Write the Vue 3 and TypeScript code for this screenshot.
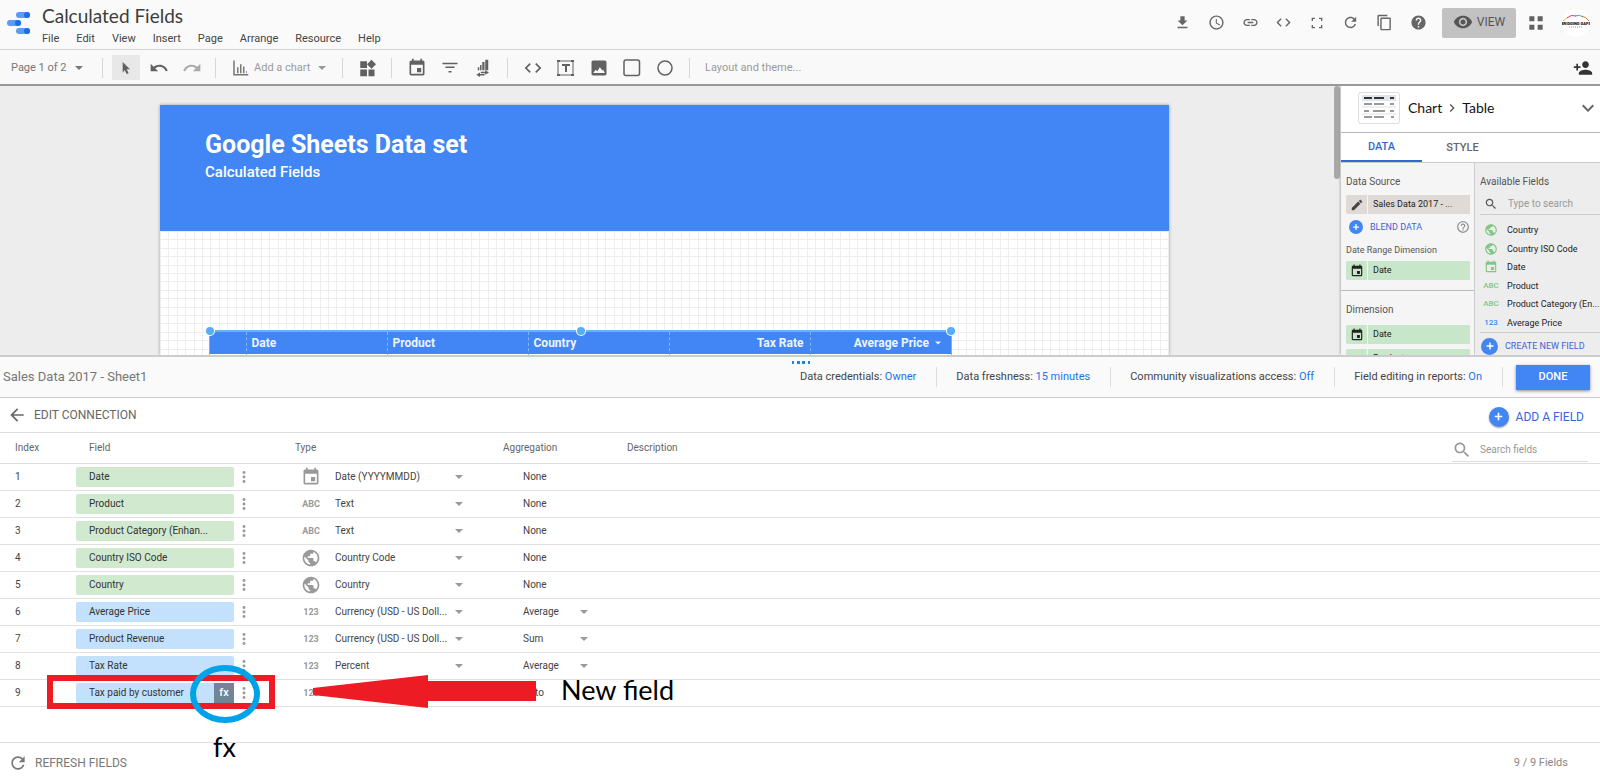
<script setup lang="ts">
import { h, ref, type FunctionalComponent } from 'vue'

const glyphs = {
  download: 'M19 9h-4V3H9v6H5l7 7 7-7zM5 18v2h14v-2H5z',
  schedule: 'M11.99 2C6.47 2 2 6.48 2 12s4.47 10 9.99 10C17.52 22 22 17.52 22 12S17.52 2 11.99 2zM12 20c-4.42 0-8-3.58-8-8s3.58-8 8-8 8 3.58 8 8-3.58 8-8 8zm.5-13H11v6l5.25 3.15.75-1.23-4.5-2.67z',
  link: 'M3.9 12c0-1.71 1.39-3.1 3.1-3.1h4V7H7c-2.76 0-5 2.24-5 5s2.24 5 5 5h4v-1.9H7c-1.71 0-3.1-1.39-3.1-3.1zM8 13h8v-2H8v2zm9-6h-4v1.9h4c1.71 0 3.1 1.39 3.1 3.1s-1.39 3.1-3.1 3.1h-4V17h4c2.76 0 5-2.24 5-5s-2.24-5-5-5z',
  code: 'M9.4 16.6L4.8 12l4.6-4.6L8 6l-6 6 6 6 1.4-1.4zm5.2 0l4.6-4.6-4.6-4.6L16 6l6 6-6 6-1.4-1.4z',
  fullscreen: 'M6 15H4v5h5v-2H6v-3zM4 9h2V6h3V4H4v5zm14 9h-3v2h5v-5h-2v3zM15 4v2h3v3h2V4h-5z',
  refresh: 'M17.65 6.35C16.2 4.9 14.21 4 12 4c-4.42 0-7.99 3.58-7.99 8s3.57 8 7.99 8c3.73 0 6.84-2.55 7.73-6h-2.08c-.82 2.33-3.04 4-5.65 4-3.31 0-6-2.69-6-6s2.69-6 6-6c1.66 0 3.14.69 4.22 1.78L13 11h7V4l-2.35 2.35z',
  copy: 'M16 1H4c-1.1 0-2 .9-2 2v14h2V3h12V1zm3 4H8c-1.1 0-2 .9-2 2v14c0 1.1.9 2 2 2h11c1.1 0 2-.9 2-2V7c0-1.1-.9-2-2-2zm0 16H8V7h11v14z',
  help: 'M12 2C6.48 2 2 6.48 2 12s4.48 10 10 10 10-4.48 10-10S17.52 2 12 2zm1 17h-2v-2h2v2zm2.07-7.75l-.9.92C13.45 12.9 13 13.5 13 15h-2v-.5c0-1.1.45-2.1 1.17-2.83l1.24-1.26c.37-.36.59-.86.59-1.41 0-1.1-.9-2-2-2s-2 .9-2 2H8c0-2.21 1.79-4 4-4s4 1.79 4 4c0 .88-.36 1.68-.93 2.25z',
  helpOutline: 'M11 18h2v-2h-2v2zm1-16C6.48 2 2 6.48 2 12s4.48 10 10 10 10-4.48 10-10S17.52 2 12 2zm0 18c-4.41 0-8-3.59-8-8s3.59-8 8-8 8 3.59 8 8-3.59 8-8 8zm0-14c-2.21 0-4 1.79-4 4h2c0-1.1.9-2 2-2s2 .9 2 2c0 2-3 1.75-3 5h2c0-2.25 3-2.5 3-5 0-2.21-1.79-4-4-4z',
  eye: 'M12 4.5C7 4.5 2.73 7.61 1 12c1.73 4.39 6 7.5 11 7.5s9.27-3.11 11-7.5c-1.73-4.39-6-7.5-11-7.5zM12 17c-2.76 0-5-2.24-5-5s2.24-5 5-5 5 2.24 5 5-2.24 5-5 5zm0-8c-1.66 0-3 1.34-3 3s1.34 3 3 3 3-1.34 3-3-1.34-3-3-3z',
  tiles: 'M4 4h6v6H4zM14 4h6v6h-6zM4 14h6v6H4zM14 14h6v6h-6z',
  cursor: 'M7 3l11 11h-5l3 6-3 1-3-6-3 4z',
  undo: 'M12.5 8c-2.65 0-5.05.99-6.9 2.6L2 7v9h9l-3.62-3.62c1.39-1.16 3.16-1.88 5.12-1.88 3.54 0 6.55 2.31 7.6 5.5l2.37-.78C21.08 11.03 17.15 8 12.5 8z',
  redo: 'M18.4 10.6C16.55 8.99 14.15 8 11.5 8c-4.65 0-8.58 3.03-9.96 7.22L3.9 16c1.05-3.19 4.05-5.5 7.6-5.5 1.95 0 3.73.72 5.12 1.88L13 16h9V7l-3.6 3.6z',
  chart: 'M3 2h2v18h18v2H3zM8 11h2v8H8zM12 7h2v12h-2zM16 10h2v9h-2zM20 16h1v3h-1z',
  widgets: 'M3 3h9v9H3zM3 14h9v9H3zM14 14h8v9h-8zM18 1l6 6-6 6-6-6z',
  event: 'M17 12h-5v5h5v-5zM16 1v2H8V1H6v2H5c-1.11 0-1.99.9-1.99 2L3 19c0 1.1.89 2 2 2h14c1.1 0 2-.9 2-2V5c0-1.1-.9-2-2-2h-1V1h-2zm3 18H5V8h14v11z',
  filter: 'M10 18h4v-2h-4v2zM2 5v2h20V5H2zm4 7h12v-2H6v2z',
  data: 'M15 1h4v14h-4zM11 4h3v11h-3zM8 8h2v7H8zM5 11h2v4H5zM15 15l5 3-5 3v-2H9v-2h6zM8 18v2h6v2H8v2l-5-3z',
  image: 'M21 19V5c0-1.1-.9-2-2-2H5c-1.1 0-2 .9-2 2v14c0 1.1.9 2 2 2h14c1.1 0 2-.9 2-2zM5 18l3-4 2 2 3-5 3 4 1-1 2 4z',
  personAdd: 'M15 12c2.21 0 4-1.79 4-4s-1.79-4-4-4-4 1.79-4 4 1.79 4 4 4zm-9-2V7H4v3H1v2h3v3h2v-3h3v-2H6zm9 4c-2.67 0-8 1.34-8 4v2h16v-2c0-2.66-5.33-4-8-4z',
  edit: 'M3 17.25V21h3.75L17.81 9.94l-3.75-3.75L3 17.25zM20.71 7.04c.39-.39.39-1.02 0-1.41l-2.34-2.34c-.39-.39-1.02-.39-1.41 0l-1.83 1.83 3.75 3.75 1.83-1.83z',
  search: 'M15.5 14h-.79l-.28-.27C15.41 12.59 16 11.11 16 9.5 16 5.91 13.09 3 9.5 3S3 5.91 3 9.5 5.91 16 9.5 16c1.61 0 3.09-.59 4.23-1.57l.27.28v.79l5 4.99L20.49 19l-4.99-5zm-6 0C7.01 14 5 11.99 5 9.5S7.01 5 9.5 5 14 7.01 14 9.5 11.99 14 9.5 14z',
  globe: 'M12 2C6.48 2 2 6.48 2 12s4.48 10 10 10 10-4.48 10-10S17.52 2 12 2zm-1 17.93c-3.95-.49-7-3.85-7-7.93 0-.62.08-1.21.21-1.79L9 15v1c0 1.1.9 2 2 2v1.93zm6.9-2.54c-.26-.81-1-1.39-1.9-1.39h-1v-3c0-.55-.45-1-1-1H8v-2h2c.55 0 1-.45 1-1V7h2c1.1 0 2-.9 2-2v-.41c2.93 1.19 5 4.06 5 7.41 0 2.08-.8 3.97-2.1 5.39z',
  back: 'M20 11H7.83l5.59-5.59L12 4l-8 8 8 8 1.41-1.41L7.83 13H20v-2z',
  down: 'M16.59 8.59L12 13.17 7.41 8.59 6 10l6 6 6-6z',
  right: 'M10 6L8.59 7.41 13.17 12l-4.58 4.59L10 18l6-6z',
  more: 'M12 3a2.2 2.2 0 100 4.4 2.2 2.2 0 000-4.4zM12 9.8a2.2 2.2 0 100 4.4 2.2 2.2 0 000-4.4zM12 16.6a2.2 2.2 0 100 4.4 2.2 2.2 0 000-4.4z',
  caret: 'M0 6h24L12 18z',
  add: 'M19 13.5h-5.5V19h-3v-5.5H5v-3h5.5V5h3v5.5H19z',
}
type Glyph = keyof typeof glyphs

const Icon: FunctionalComponent<{ name: Glyph; size: number }> = (props) =>
  h('svg', { width: props.size, height: props.size, viewBox: '0 0 24 24', 'aria-hidden': 'true', class: 'icon' }, [
    h('path', { d: glyphs[props.name], fill: 'currentColor' }),
  ])
Icon.props = ['name', 'size']

const menus = ['File', 'Edit', 'View', 'Insert', 'Page', 'Arrange', 'Resource', 'Help']

const actions: { name: Glyph; label: string; size: number }[] = [
  { name: 'download', label: 'Download', size: 17 },
  { name: 'schedule', label: 'Schedule', size: 17 },
  { name: 'link', label: 'Get link', size: 17 },
  { name: 'code', label: 'Embed', size: 17 },
  { name: 'fullscreen', label: 'Full screen', size: 16 },
  { name: 'refresh', label: 'Refresh data', size: 17 },
  { name: 'copy', label: 'Make a copy', size: 17 },
  { name: 'help', label: 'Help', size: 17 },
]

type Kind = 'date' | 'text' | 'geo' | 'num'

const available: { label: string; kind: Kind }[] = [
  { label: 'Country', kind: 'geo' },
  { label: 'Country ISO Code', kind: 'geo' },
  { label: 'Date', kind: 'date' },
  { label: 'Product', kind: 'text' },
  { label: 'Product Category (En...', kind: 'text' },
  { label: 'Average Price', kind: 'num' },
]

interface Row {
  name: string
  kind: Kind
  type: string
  agg: string
  measure?: boolean
  fx?: boolean
}
const rows: Row[] = [
  { name: 'Date', kind: 'date', type: 'Date (YYYYMMDD)', agg: 'None' },
  { name: 'Product', kind: 'text', type: 'Text', agg: 'None' },
  { name: 'Product Category (Enhan...', kind: 'text', type: 'Text', agg: 'None' },
  { name: 'Country ISO Code', kind: 'geo', type: 'Country Code', agg: 'None' },
  { name: 'Country', kind: 'geo', type: 'Country', agg: 'None' },
  { name: 'Average Price', kind: 'num', type: 'Currency (USD - US Doll...', agg: 'Average', measure: true },
  { name: 'Product Revenue', kind: 'num', type: 'Currency (USD - US Doll...', agg: 'Sum', measure: true },
  { name: 'Tax Rate', kind: 'num', type: 'Percent', agg: 'Average', measure: true },
  { name: 'Tax paid by customer', kind: 'num', type: 'Number', agg: 'Auto', measure: true, fx: true },
]

const settings = [
  { label: 'Data credentials:', value: 'Owner' },
  { label: 'Data freshness:', value: '15 minutes' },
  { label: 'Community visualizations access:', value: 'Off' },
  { label: 'Field editing in reports:', value: 'On' },
]

const fieldQuery = ref('')
const tableQuery = ref('')
</script>

<template>
  <div class="app">
    <header class="top">
      <svg class="logo" width="24" height="24" viewBox="0 0 24 24" aria-hidden="true">
        <g fill="#5c9bf7">
          <rect x="9" y="1" width="14" height="6" rx="3" />
          <rect x="0" y="9" width="14" height="6" rx="3" />
          <rect x="9" y="17" width="14" height="6" rx="3" />
        </g>
        <g fill="#1a6fe8">
          <circle cx="20" cy="4" r="3" />
          <circle cx="11" cy="12" r="3" />
          <circle cx="20" cy="20" r="3" />
        </g>
      </svg>
      <div class="heading">
        <h1>Calculated Fields</h1>
        <nav class="menus">
          <button v-for="m in menus" :key="m">{{ m }}</button>
        </nav>
      </div>
      <div class="actions">
        <button v-for="a in actions" :key="a.name" :aria-label="a.label"><Icon :name="a.name" :size="a.size" /></button>
      </div>
      <button class="view"><Icon name="eye" :size="20" /><span>VIEW</span></button>
      <button class="apps" aria-label="Apps"><Icon name="tiles" :size="20" /></button>
      <svg class="avatar" width="28" height="28" viewBox="0 0 28 28" aria-hidden="true">
        <circle cx="14" cy="14" r="14" fill="#fff" />
        <g fill="none" stroke-width="1">
          <path d="M1 12l5-4" stroke="#d8c02c" />
          <path d="M5 9q4-4 9-2" stroke="#d63a8c" />
          <path d="M13 7q5-2 8 1" stroke="#36a5dc" />
          <path d="M20 7q4 1 7 5" stroke="#e8742c" />
        </g>
        <text x="14" y="16" text-anchor="middle" font-size="4" font-weight="900" fill="#111">BRIDGING GAPS</text>
        <path d="M7 18h14" stroke="#999" stroke-width="1" stroke-dasharray="1 1" />
      </svg>
    </header>

    <div class="toolbar">
      <button class="pager">Page 1 of 2 <Icon name="caret" :size="8" /></button>
      <i class="rule"></i>
      <div class="group history">
        <button class="tool on" aria-label="Select"><Icon name="cursor" :size="16" /></button>
        <button class="tool" aria-label="Undo"><Icon name="undo" :size="20" /></button>
        <button class="tool faded" aria-label="Redo"><Icon name="redo" :size="20" /></button>
      </div>
      <i class="rule"></i>
      <button class="add-chart"><Icon name="chart" :size="18" /><span>Add a chart</span><Icon name="caret" :size="8" /></button>
      <i class="rule"></i>
      <button class="tool solo" aria-label="Community visualizations"><Icon name="widgets" :size="18" /></button>
      <i class="rule"></i>
      <div class="group">
        <button class="tool" aria-label="Date range"><Icon name="event" :size="20" /></button>
        <button class="tool" aria-label="Filter control"><Icon name="filter" :size="18" /></button>
        <button class="tool" aria-label="Data control"><Icon name="data" :size="18" /></button>
      </div>
      <i class="rule"></i>
      <div class="group">
        <button class="tool" aria-label="URL embed"><Icon name="code" :size="20" /></button>
        <button class="tool" aria-label="Text">
          <svg width="18" height="18" viewBox="0 0 18 18" fill="none" stroke="currentColor">
            <rect x="1" y="2" width="15" height="14" />
            <path d="M5 6h8M9 6v7" stroke-width="2" />
            <path d="M0 1h3v2H0zM14 1h3v2h-3zM0 15h3v2H0zM14 15h3v2h-3z" fill="currentColor" stroke="none" />
          </svg>
        </button>
        <button class="tool" aria-label="Image"><Icon name="image" :size="20" /></button>
        <button class="tool" aria-label="Rectangle">
          <svg width="18" height="18" viewBox="0 0 18 18" fill="none" stroke="currentColor" stroke-width="1.5"><rect x="1" y="1" width="15.5" height="15.5" rx="2" /></svg>
        </button>
        <button class="tool" aria-label="Circle">
          <svg width="18" height="18" viewBox="0 0 18 18" fill="none" stroke="currentColor" stroke-width="1.5"><circle cx="9" cy="9" r="7" /></svg>
        </button>
      </div>
      <i class="rule"></i>
      <button class="layout-btn">Layout and theme...</button>
      <button class="share" aria-label="Add people"><Icon name="personAdd" :size="20" /></button>
    </div>

    <main class="workspace">
      <div class="stage">
        <section class="page">
          <div class="banner">
            <h2>Google Sheets Data set</h2>
            <p>Calculated Fields</p>
          </div>
          <div class="sheet">
            <svg class="grid" width="100%" height="100%" aria-hidden="true">
              <defs>
                <pattern id="grid" width="42" height="42" patternUnits="userSpaceOnUse">
                  <path d="M0 0h1v42H0zM8 0h1v42H8zM17 0h1v42h-1zM25 0h1v42h-1zM34 0h1v42h-1zM0 0h42v1H0zM0 8h42v1H0zM0 17h42v1H0zM0 25h42v1H0zM0 34h42v1H0z" fill="#eee" />
                </pattern>
              </defs>
              <rect width="100%" height="100%" fill="url(#grid)" />
            </svg>
            <div class="chart">
              <table>
                <thead>
                  <tr>
                    <th class="num" aria-label="Row"></th>
                    <th>Date</th>
                    <th>Product</th>
                    <th>Country</th>
                    <th class="end">Tax Rate</th>
                    <th class="end">Average Price <Icon name="caret" :size="6" /></th>
                  </tr>
                </thead>
              </table>
              <i class="handle start"></i><i class="handle mid"></i><i class="handle finish"></i>
            </div>
          </div>
        </section>
        <i class="thumb"></i>
      </div>

      <aside class="props">
        <div class="crumb">
          <span class="preview">
            <svg width="34" height="26" viewBox="0 0 34 26" aria-hidden="true">
              <rect width="34" height="6" fill="#e3e5ee" />
              <path d="M2 3h8M12 3h10M28 3h4" stroke="#333" stroke-width="2" />
              <path d="M2 9h8M12 9h10M28 9h4M2 16h5M11 16h12M28 16h4M2 22h8M12 22h10M29 22h3" stroke="#999" stroke-width="2" />
              <path d="M0 12h34M0 19h34" stroke="#e0e0e0" />
            </svg>
          </span>
          <span>Chart</span><Icon name="right" :size="16" /><span>Table</span>
          <button class="fold" aria-label="Collapse"><Icon name="down" :size="24" /></button>
        </div>
        <div class="tabs">
          <button class="tab active">DATA</button>
          <button class="tab">STYLE</button>
        </div>
        <div class="columns">
          <div class="config">
            <section>
              <h3>Data Source</h3>
              <button class="chip source"><b><Icon name="edit" :size="14" /></b><span>Sales Data 2017 - ...</span></button>
              <div class="blend">
                <button><i class="plus small"><Icon name="add" :size="10" /></i>BLEND DATA</button>
                <Icon name="helpOutline" :size="14" />
              </div>
              <h4>Date Range Dimension</h4>
              <button class="chip"><b><Icon name="event" :size="14" /></b><span>Date</span></button>
            </section>
            <section class="dims">
              <h3>Dimension</h3>
              <button class="chip"><b><Icon name="event" :size="14" /></b><span>Date</span></button>
              <button class="chip"><b><em class="mark">ABC</em></b><span>Product</span></button>
            </section>
          </div>
          <div class="fields">
            <h3>Available Fields</h3>
            <label class="search"><Icon name="search" :size="14" /><input v-model="fieldQuery" placeholder="Type to search" aria-label="Search available fields" /></label>
            <ul>
              <li v-for="f in available" :key="f.label" :class="{ blue: f.kind === 'num' }">
                <span class="type">
                  <Icon v-if="f.kind === 'geo'" name="globe" :size="14" />
                  <Icon v-else-if="f.kind === 'date'" name="event" :size="14" />
                  <em v-else class="mark">{{ f.kind === 'text' ? 'ABC' : '123' }}</em>
                </span>
                {{ f.label }}
              </li>
            </ul>
            <button class="create"><i class="plus medium"><Icon name="add" :size="12" /></i>CREATE NEW FIELD</button>
          </div>
        </div>
      </aside>
    </main>

    <section class="dock">
      <svg class="grip" width="18" height="3" viewBox="0 0 18 3" aria-hidden="true"><path d="M0 0h2v3H0zM5 0h3v3H5zM10 0h3v3h-3zM16 0h2v3h-2z" fill="#1e88e5" /></svg>
      <div class="dock-head">
        <h2>Sales Data 2017 - Sheet1</h2>
        <ul class="settings">
          <li v-for="s in settings" :key="s.label">{{ s.label }} <a href="#">{{ s.value }}</a></li>
        </ul>
        <button class="done">DONE</button>
      </div>
      <div class="dock-bar">
        <button class="back"><Icon name="back" :size="20" />EDIT CONNECTION</button>
        <button class="add-field"><i class="plus large"><Icon name="add" :size="13" /></i>ADD A FIELD</button>
      </div>
      <table class="schema">
        <colgroup>
          <col class="c-index" /><col class="c-field" /><col class="c-type" /><col class="c-agg" /><col />
        </colgroup>
        <thead>
          <tr>
            <th>Index</th>
            <th class="h-field">Field</th>
            <th class="h-type">Type</th>
            <th>Aggregation</th>
            <th>
              <div class="desc">
                Description
                <label class="find"><Icon name="search" :size="20" /><input v-model="tableQuery" placeholder="Search fields" aria-label="Search fields" /></label>
              </div>
            </th>
          </tr>
        </thead>
        <tbody>
          <tr v-for="(r, i) in rows" :key="r.name">
            <td>{{ i + 1 }}</td>
            <td class="field">
              <div class="cell">
                <button class="pill" :class="{ measure: r.measure }">{{ r.name }}<b v-if="r.fx">fx</b></button>
                <button class="dots" :aria-label="'More options for ' + r.name"><Icon name="more" :size="16" /></button>
              </div>
            </td>
            <td>
              <div class="cell">
                <span class="kind">
                  <Icon v-if="r.kind === 'date'" name="event" :size="20" />
                  <Icon v-else-if="r.kind === 'geo'" name="globe" :size="20" />
                  <em v-else class="mark">{{ r.kind === 'text' ? 'ABC' : '123' }}</em>
                </span>
                <select v-if="!r.fx" class="type-select" :aria-label="'Type of ' + r.name"><option>{{ r.type }}</option></select>
                <Icon v-if="!r.fx" name="caret" :size="8" />
              </div>
            </td>
            <td>
              <div class="cell agg">
                <span v-if="!r.measure || r.fx">{{ r.agg }}</span>
                <template v-else>
                  <select class="agg-select" :aria-label="'Aggregation of ' + r.name"><option>{{ r.agg }}</option></select>
                  <Icon name="caret" :size="8" />
                </template>
              </div>
            </td>
            <td></td>
          </tr>
        </tbody>
      </table>
      <footer class="foot">
        <button><Icon name="refresh" :size="20" />REFRESH FIELDS</button>
        <span>9 / 9 Fields</span>
      </footer>

      <svg class="notes" width="700" height="425" viewBox="0 0 700 425">
        <rect x="50" y="321" width="222" height="28" fill="none" stroke="#ed1c24" stroke-width="6" />
        <ellipse cx="225" cy="337" rx="32" ry="26" fill="none" stroke="#00a2e8" stroke-width="6" />
        <path d="M313 331l115-13v6h108v20H428v7l-115-13z" fill="#ed1c24" />
        <text x="213" y="400">fx</text>
        <text x="561" y="343">New field</text>
      </svg>
    </section>
  </div>
</template>

<style>
html,
body {
  margin: 0;
  background: #fff;
}
</style>

<style scoped>
.app {
  display: flex;
  flex-direction: column;
  height: 100vh;
  overflow: hidden;
  font: 11px/14px Roboto, sans-serif;
  color: #444;
}
* {
  box-sizing: border-box;
}
h1, h2, h3, h4, p, ul {
  margin: 0;
  padding: 0;
  font-weight: 400;
  list-style: none;
}
button, input, select {
  margin: 0;
  padding: 0;
  border: 0;
  background: none;
  font: inherit;
  color: inherit;
  outline: none;
}
em, i {
  font-style: normal;
}
svg {
  flex: none;
  display: block;
}

.top {
  display: flex;
  align-items: center;
  flex: none;
  height: 50px;
  background: #fafafa;
  border-bottom: 1px solid #d4d4d4;
  padding-right: 10px;
}
.logo {
  margin: 0 11px 4px 7px;
}
.heading {
  flex: 1;
}
h1 {
  font: 19px/24px Lato, sans-serif;
  color: #3c3c3c;
}
.menus {
  display: flex;
  gap: 17px;
  padding-top: 4px;
  color: #444;
}
.actions {
  display: grid;
  grid-template-columns: repeat(8, 1fr);
  width: 269px;
  color: #666;
  margin: 0 7px 4px 0;
}
.actions button {
  display: grid;
  place-items: center;
}
.view {
  display: flex;
  align-items: center;
  justify-content: center;
  gap: 4px;
  width: 74px;
  height: 30px;
  margin-bottom: 4px;
  padding-bottom: 1px;
  background: #c2c2c2;
  border-radius: 2px;
  font-size: 12px;
  color: #555;
}
.apps {
  margin: 0 16px 4px 10px;
  color: #616161;
}
.avatar {
  margin-bottom: 4px;
}

.toolbar {
  display: flex;
  align-items: center;
  flex: none;
  height: 36px;
  background: #f9f9f9;
  border-bottom: 2px solid #999;
  padding: 1px 7px 0 11px;
  color: #616161;
}
.rule {
  width: 1px;
  height: 20px;
  background: #d6d6d6;
}
.pager {
  display: flex;
  align-items: center;
  gap: 8px;
  width: 91px;
  color: #777;
}
.group {
  display: flex;
  padding: 0 8px;
}
.history {
  padding: 0 7px 0 6px;
}
.tool {
  display: grid;
  place-items: center;
  width: 33px;
  height: 25px;
}
.history .tool.on {
  width: 28px;
  margin: 0 2px 0 3px;
  background: #e8e8e8;
}
.faded {
  color: #aaa;
}
.add-chart {
  display: flex;
  align-items: center;
  width: 126px;
  padding-left: 15px;
  gap: 5px;
  color: #999;
}
.add-chart .icon:first-child {
  color: #777;
}
.add-chart span {
  margin-right: 3px;
}
.solo {
  width: 48px;
}
.layout-btn {
  margin-left: 15px;
  color: #999;
}
.share {
  margin-left: auto;
  color: #333;
}

.workspace {
  display: flex;
  flex: 1 1 0;
  min-height: 0;
  overflow: hidden;
}
.stage {
  display: flex;
  flex: 1;
  background: #ededed;
  padding: 0 0 0 160px;
}
.page {
  display: flex;
  flex-direction: column;
  flex: 1;
  margin: 19px 165px 0 0;
  background: #fff;
  box-shadow: 0 0 3px #999;
}
.thumb {
  width: 6px;
  height: 93px;
  margin-right: 1px;
  background: #a8a8a8;
  border-radius: 3px;
}
.banner {
  height: 126px;
  padding: 24px 45px;
  background: #4285f4;
  color: #fff;
}
.banner h2 {
  font-size: 25px;
  line-height: 32px;
  font-weight: 700;
}
.banner p {
  font-size: 15px;
  line-height: 22px;
  font-weight: 500;
}
.sheet {
  position: relative;
  flex: 1;
  min-height: 0;
}
.grid {
  position: absolute;
  inset: 0;
}
.chart {
  position: relative;
  width: 743px;
  height: 140px;
  margin: 99px 0 0 49px;
  border: 1px solid #64b5f6;
  border-top-width: 2px;
  background: linear-gradient(#4285f4 22px, #fff 22px);
}
.chart table {
  width: 100%;
  height: 30px;
  border-collapse: collapse;
  table-layout: fixed;
}
.chart th {
  height: 30px;
  padding: 0 6px 8px 5px;
  border-left: 1px dashed #7db8f8;
  font-size: 12px;
  font-weight: 700;
  color: #eef4ff;
  text-align: left;
  white-space: nowrap;
}
.chart th.num {
  width: 36px;
  border-left: 0;
}
.chart th.end {
  text-align: right;
}
.chart th .icon {
  display: inline-block;
  margin: 0 4px 1px 3px;
}
.handle {
  position: absolute;
  top: -5px;
  width: 8px;
  height: 8px;
  border-radius: 50%;
  background: #56aef5;
  box-shadow: 0 0 0 1px #fff;
}
.start {
  left: -4px;
}
.mid {
  left: calc(50% - 4px);
}
.finish {
  right: -4px;
}

.props {
  display: flex;
  flex-direction: column;
  width: 259px;
  background: #fff;
  box-shadow: 0 0 3px #888;
  overflow: hidden;
}
.crumb {
  display: flex;
  align-items: center;
  flex: none;
  height: 47px;
  padding: 0 0 3px 17px;
  border-bottom: 1px solid #bbb;
  font: 14px/18px Lato, sans-serif;
  color: #111;
}
.crumb > .icon {
  margin: 0 2px;
  color: #555;
}
.preview {
  display: grid;
  place-items: center;
  width: 42px;
  height: 32px;
  margin-right: 8px;
  border: 1px solid #ddd;
  border-radius: 3px;
}
.fold {
  margin-left: auto;
  color: #666;
}
.tabs {
  display: flex;
  flex: none;
  height: 30px;
  border-bottom: 1px solid #ccc;
}
.tab {
  width: 81px;
  font-weight: 500;
  color: #666;
}
.tab.active {
  color: #3367d6;
  border-bottom: 2px solid #3367d6;
}
.columns {
  display: flex;
  flex: 1;
  min-height: 0;
}
.config {
  width: 134px;
  flex: none;
  background: #f5f5f5;
  border-right: 1px solid #ccc;
}
.config section {
  height: 128px;
  padding: 12px 4px 0 5px;
  border-bottom: 1px solid #bbb;
}
h3, h4 {
  font-size: 10px;
  line-height: 14px;
  color: #555;
}
h4 {
  font-size: 9px;
  margin-bottom: 4px;
}
.chip {
  display: flex;
  gap: 1px;
  width: 100%;
  height: 19px;
  margin-bottom: 5px;
  font-size: 9px;
  line-height: 19px;
  color: #222;
}
.chip b {
  display: grid;
  place-items: center;
  width: 21px;
  background: #c8e6c9;
  border-radius: 2px 0 0 2px;
}
.chip span {
  flex: 1;
  padding-left: 5px;
  text-align: left;
  background: #c8e6c9;
}
.chip.source {
  margin: 6px 0;
}
.source b, .source span {
  background: #e0dad6;
}
.source b {
  color: #444;
}
.dims h3 {
  margin-bottom: 8px;
}
.blend {
  display: flex;
  align-items: center;
  justify-content: space-between;
  margin-bottom: 9px;
  height: 14px;
  color: #888;
}
.blend button, .create {
  display: flex;
  align-items: center;
  gap: 7px;
  font-size: 9px;
  color: #3f63d2;
}
.blend button {
  padding-left: 3px;
}
.plus {
  display: grid;
  place-items: center;
  border-radius: 50%;
  background: #4285f4;
  color: #fff;
}
.small {
  width: 14px;
  height: 14px;
}
.medium {
  width: 17px;
  height: 17px;
}
.large {
  width: 20px;
  height: 20px;
  box-shadow: 0 1px 2px #999;
}
.fields {
  flex: 1;
  min-width: 0;
  padding: 12px 0 0 5px;
  background: #ededed;
}
.search {
  display: flex;
  align-items: center;
  gap: 10px;
  height: 26px;
  padding: 4px 0 0 4px;
  border-bottom: 1px solid #ccc;
  font-size: 10px;
  color: #555;
}
.search input {
  min-width: 0;
}
input::placeholder {
  color: #999;
}
.fields ul {
  display: grid;
  grid-template-rows: repeat(6, 1fr);
  height: 111px;
  margin: 6px 0 0 -5px;
}
.fields li {
  display: flex;
  align-items: center;
  gap: 7px;
  padding-left: 7px;
  font-size: 9px;
  color: #222;
  white-space: nowrap;
}
.type {
  display: grid;
  place-items: center;
  width: 18px;
  color: #81c784;
}
.blue .type {
  color: #4285f4;
}
.mark {
  font-size: 8px;
  font-weight: 500;
}
.create {
  width: 100%;
  height: 27px;
  padding-left: 1px;
  border-top: 1px solid #ccc;
}

.dock {
  position: relative;
  flex: none;
  background: #fff;
  border-top: 2px solid #ccc;
}
.grip {
  position: absolute;
  left: calc(50% - 8px);
  top: 4px;
}
.dock-head {
  display: flex;
  align-items: center;
  height: 41px;
  padding: 0 10px 0 3px;
  background: #fafafa;
  border-bottom: 1px solid #ccc;
}
.dock-head h2 {
  flex: 1;
  font-size: 13px;
  color: #777;
}
.settings {
  display: flex;
}
.settings li {
  padding: 3px 20px 3px 19px;
  border-right: 1px solid #ddd;
}
.settings a {
  color: #1a73e8;
  text-decoration: none;
}
.done {
  width: 74px;
  height: 25px;
  margin-left: 13px;
  background: #4285f4;
  box-shadow: 0 1px 3px #888;
  font-weight: 500;
  color: #fff;
}
.dock-bar {
  display: flex;
  align-items: center;
  justify-content: space-between;
  height: 35px;
  padding: 0 16px 0 7px;
  border-bottom: 1px solid #ddd;
  font-size: 12px;
}
.dock-bar button {
  display: flex;
  align-items: center;
  gap: 7px;
  color: #666;
}
.dock-bar .add-field {
  padding-top: 3px;
  color: #3367d6;
}

.schema {
  width: 100%;
  margin-bottom: 35px;
  border-collapse: separate;
  border-spacing: 0;
  table-layout: fixed;
  font-size: 10px;
}
.c-index {
  width: 76px;
}
.c-field {
  width: 219px;
}
.c-type {
  width: 208px;
}
.c-agg {
  width: 124px;
}
.schema th {
  height: 31px;
  padding: 0;
  border-bottom: 1px solid #ddd;
  font-weight: 400;
  text-align: left;
  color: #666;
}
.schema th:first-child, .schema td:first-child {
  padding-left: 15px;
}
.schema .h-field {
  padding-left: 13px;
}
.desc {
  display: flex;
  align-items: center;
  justify-content: space-between;
  padding-right: 12px;
}
.find {
  display: flex;
  align-items: center;
  gap: 8px;
  width: 136px;
  height: 28px;
  padding-top: 4px;
  border-bottom: 1px solid #ddd;
  color: #999;
}
.find input {
  min-width: 0;
  flex: 1;
}
.schema td {
  height: 27px;
  padding: 0;
  border-bottom: 1px solid #e0e0e0;
  color: #444;
}
.cell {
  display: flex;
  align-items: center;
  height: 20px;
}
.cell > .icon {
  color: #999;
}
.pill {
  display: flex;
  align-items: center;
  justify-content: space-between;
  width: 158px;
  height: 20px;
  padding-left: 13px;
  border-radius: 2px;
  background: #d0e9cf;
  color: #333;
}
.pill.measure {
  background: #c3e1fc;
}
.pill b {
  width: 20px;
  line-height: 20px;
  background: #738498;
  color: #fff;
  font-size: 11px;
  font-weight: 500;
  text-align: center;
}
.dots {
  width: 20px;
  display: grid;
  place-items: center;
  color: #999;
}
.kind {
  display: grid;
  place-items: center;
  width: 32px;
  margin-right: 8px;
  color: #999;
}
.kind .mark {
  font-size: 9px;
  font-weight: 700;
}
select {
  appearance: none;
}
.type-select {
  width: 120px;
}
.agg {
  padding-left: 20px;
}
.agg-select {
  width: 57px;
}
.foot {
  display: flex;
  align-items: center;
  justify-content: space-between;
  height: 40px;
  padding: 0 32px 0 8px;
  border-top: 1px solid #ddd;
  color: #888;
}
.foot button {
  display: flex;
  align-items: center;
  gap: 7px;
  font-size: 12px;
  color: #777;
}
.notes {
  position: absolute;
  left: 0;
  top: 0;
  pointer-events: none;
}
.notes text {
  font: 27px Lato, sans-serif;
  fill: #000;
}
</style>
